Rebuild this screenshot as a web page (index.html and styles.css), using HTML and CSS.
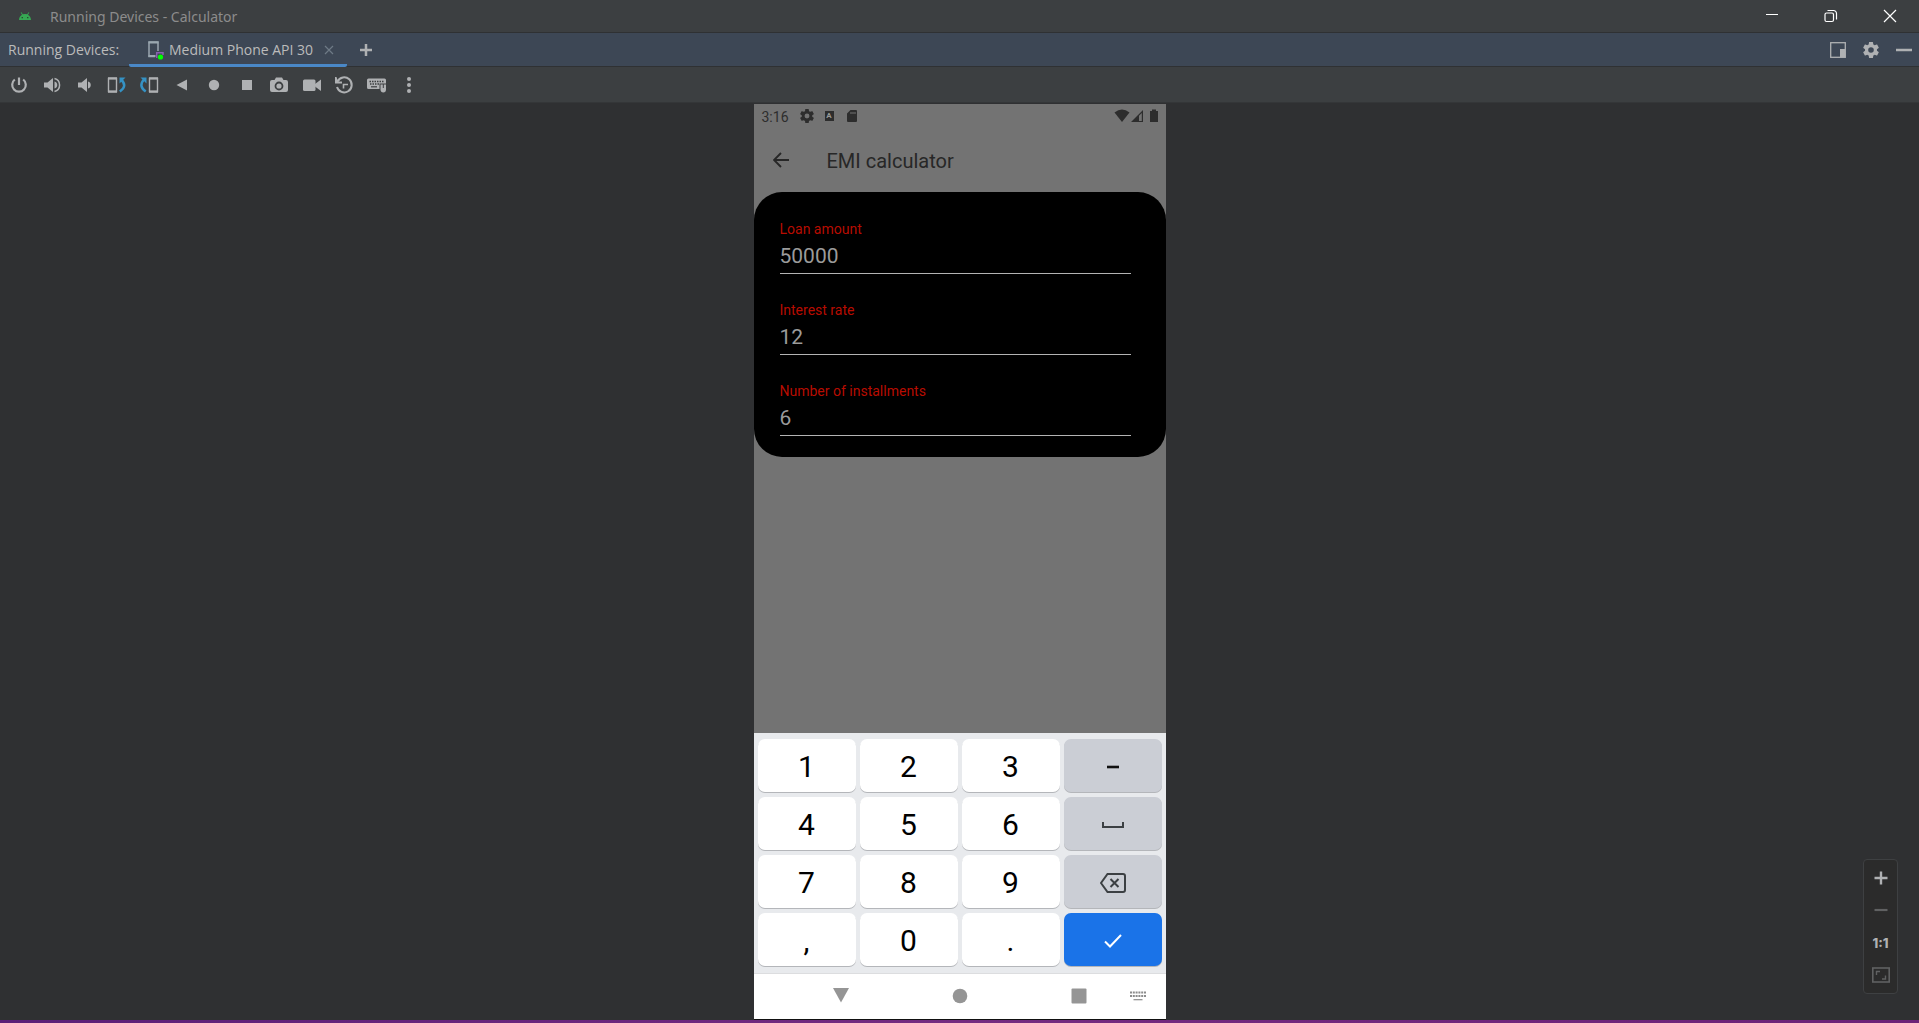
FILE: index.html
```html
<!DOCTYPE html>
<html lang="en">
<head>
<meta charset="utf-8">
<meta name="viewport" content="width=device-width, initial-scale=1">
<title>Running Devices - Calculator</title>
<link rel="stylesheet" href="styles.css">
</head>
<body>
<div class="window">
  <header class="titlebar">
    <svg class="app-logo" viewBox="0 0 12 8" width="12" height="8"><path fill="#36a853" d="M0 8C.1 5.500 1.300 3.700 3 2.700L1.700.6 2.400.2 3.800 2.300Q6 1.500 8.200 2.300L9.600.2 10.300.6 9 2.700C10.700 3.700 11.900 5.500 12 8Z"/><path fill="#24452d" d="M2.600 5h1.300v1.300H2.600zM8.100 5h1.300v1.300H8.100z"/></svg>
    <h1 class="window-title">Running Devices - Calculator</h1>
    <div class="window-controls">
      <button type="button" aria-label="Minimize"><svg width="14" height="14" viewBox="0 0 14 14"><path d="M1 5.500h12" stroke="#fff"/></svg></button>
      <button type="button" aria-label="Restore"><svg width="14" height="14" viewBox="0 0 14 14" fill="none" stroke="#fff" stroke-width="1.200"><rect x="1" y="4" width="8.500" height="8.500" rx="1.500"/><path d="M3.500 1.500h6a3 3 0 0 1 3 3v6"/></svg></button>
      <button type="button" aria-label="Close"><svg width="14" height="14" viewBox="0 0 14 14"><path d="M1 1l12 12M13 1L1 13" stroke="#fff" stroke-width="1.200"/></svg></button>
    </div>
  </header>

  <nav class="tabbar">
    <span class="tabbar-label">Running Devices:</span>
    <div class="tab">
      <svg width="16" height="20" viewBox="0 0 16 20"><path d="M7 16.500H1V2h9v9" fill="none" stroke="#9aa7b0" stroke-width="1.500"/><path d="M.5 2.500h10M.5 16h7" stroke="#9aa7b0" stroke-width="2"/><path d="M8.700 18V12.700H15V15" fill="none" stroke="#8a5fb0" stroke-width="1.500"/><circle cx="12.500" cy="17" r="2.600" fill="#0f0"/></svg>
      <a href="#device" class="tab-name">Medium Phone API 30</a>
      <button type="button" aria-label="Close tab"><svg width="10" height="10" viewBox="0 0 10 10"><path d="M1 1l8 8M9 1L1 9" stroke="#6e7a85" stroke-width="1.200"/></svg></button>
    </div>
    <button type="button" class="add-tab" aria-label="Add device"><svg width="14" height="14" viewBox="0 0 14 14"><path d="M7 1v12M1 7h12" stroke="#afb1b3" stroke-width="2.500"/></svg></button>
    <div class="tabbar-actions">
      <button type="button" aria-label="Dock"><svg width="16" height="16" viewBox="0 0 16 16"><rect x=".7" y=".7" width="14.600" height="14.600" fill="none" stroke="#afb1b3" stroke-width="1.300"/><path fill="#afb1b3" d="M10 7h5v8h-5z"/></svg></button>
      <button type="button" aria-label="Settings"><svg width="16" height="16" viewBox="2 2 20 20"><use href="#gear" fill="#afb1b3"/></svg></button>
      <button type="button" aria-label="Hide"><svg width="16" height="16" viewBox="0 0 16 16"><path d="M0 8h16" stroke="#afb1b3" stroke-width="2.500"/></svg></button>
    </div>
  </nav>

  <div class="toolbar" role="toolbar" aria-label="Device controls">
    <div class="tools">
      <button type="button" aria-label="Power"><svg viewBox="0 0 20 20"><path d="M5.800 4.500a6.800 6.800 0 1 0 8.400 0" fill="none" stroke="#afb1b3" stroke-width="2.200"/><path d="M10 2.500v7.500" stroke="#afb1b3" stroke-width="2.200"/></svg></button>
      <button type="button" aria-label="Volume up"><svg viewBox="0 0 20 20"><path fill="#afb1b3" d="M2 7.500h3.500L11 3v14l-5.500-4.500H2z"/><path d="M12.500 3.500a6.700 6.700 0 0 1 0 13" fill="none" stroke="#afb1b3" stroke-width="1.500"/><path fill="#afb1b3" d="M12.500 6.500a3.600 3.600 0 0 1 0 7z"/></svg></button>
      <button type="button" aria-label="Volume down"><svg viewBox="0 0 20 20"><path fill="#afb1b3" d="M4 7.500h3.500L13 3v14l-5.500-4.500H4zM14 6.500a3.600 3.600 0 0 1 0 7z"/></svg></button>
      <button type="button" aria-label="Rotate left"><svg viewBox="0 0 20 20"><path d="M1.500 3.500h8v13h-8z" fill="none" stroke="#afb1b3" stroke-width="1.400"/><path d="M1 3.400h9M1 16.600h9" stroke="#afb1b3" stroke-width="2.400"/><path d="M14 4.500q7 6.500-1.200 12" fill="none" stroke="#3592c4" stroke-width="2.500"/><path fill="#3592c4" d="M12.500 2.500h6l-6 6z"/></svg></button>
      <button type="button" aria-label="Rotate right"><svg viewBox="0 0 20 20"><path d="M10.500 3.500h8v13h-8z" fill="none" stroke="#afb1b3" stroke-width="1.400"/><path d="M10 3.400h9M10 16.600h9" stroke="#afb1b3" stroke-width="2.400"/><path d="M5 4.500q-6 6.500 1.700 12" fill="none" stroke="#3592c4" stroke-width="2.500"/><path fill="#3592c4" d="M7.500 2.500h-6l6 6z"/></svg></button>
      <button type="button" aria-label="Back"><svg viewBox="0 0 20 20"><path fill="#afb1b3" d="M15 4.500v11L4.500 10z"/></svg></button>
      <button type="button" aria-label="Home"><svg viewBox="0 0 20 20"><circle cx="10" cy="10" r="5.200" fill="#afb1b3"/></svg></button>
      <button type="button" aria-label="Overview"><svg viewBox="0 0 20 20"><path fill="#afb1b3" d="M5 5h10v10H5z"/></svg></button>
      <button type="button" aria-label="Screenshot"><svg viewBox="0 0 20 20"><path fill="#afb1b3" fill-rule="evenodd" d="M7 2.500h6l1.500 2.500H17q2 0 2 2v8q0 2-2 2H3q-2 0-2-2V7q0-2 2-2h2.500zM10 6.600a4.400 4.400 0 1 0 0 8.800 4.400 4.400 0 0 0 0-8.800z"/><circle cx="10" cy="11" r="2.600" fill="#afb1b3"/></svg></button>
      <button type="button" aria-label="Record"><svg viewBox="0 0 20 20"><rect x="1" y="4.500" width="12.500" height="11.500" rx="1.500" fill="#afb1b3"/><path fill="#afb1b3" d="M13 9l6-4.500v11.500L13 11.500z"/></svg></button>
      <button type="button" aria-label="Snapshots"><svg viewBox="0 0 20 20"><path d="M3.500 6.500A7.500 7.500 0 1 1 3 12" fill="none" stroke="#afb1b3" stroke-width="2"/><path fill="#afb1b3" d="M1 2v6.500h7v-2H4L2.500 2z"/><path d="M9.500 13.500v-4H14" fill="none" stroke="#afb1b3" stroke-width="1.600"/></svg></button>
      <button type="button" aria-label="Hardware input"><svg viewBox="0 0 20 20"><path fill="#afb1b3" d="M1.500 3.500h16q1.500 0 1.500 1.500v3.500h-6.500V14h-11Q0 14 0 12.500V5q0-1.500 1.500-1.500z"/><path d="M2.500 6.500h14.500M3 9h10" stroke="#3c3f41" stroke-width="1.400" stroke-dasharray="1.500 1"/><path d="M4 11.800h6" stroke="#3c3f41" stroke-width="1.200"/><path fill="#afb1b3" d="M13.500 9.500h5.500v5q0 3-2.700 3t-2.800-3z"/><path d="M16.300 9v4" stroke="#3c3f41"/></svg></button>
      <button type="button" aria-label="More"><svg viewBox="0 0 20 20" fill="#afb1b3"><circle cx="10" cy="4" r="2"/><circle cx="10" cy="10" r="2"/><circle cx="10" cy="16" r="2"/></svg></button>
    </div>
  </div>

  <main class="canvas">
    <section class="phone" id="device">
      <div class="statusbar">
        <span class="clock">3:16</span>
        <svg width="14" height="14" viewBox="2 2 20 20"><path id="gear" fill-rule="evenodd" d="M19.430 12.980c.04-.32.07-.64.07-.98s-.03-.66-.07-.98l2.110-1.650c.19-.15.24-.42.120-.64l-2-3.460c-.12-.22-.39-.3-.61-.22l-2.490 1a7.300 7.300 0 0 0-1.690-.98l-.38-2.650A.49.49 0 0 0 14 2h-4c-.25 0-.46.18-.49.42l-.38 2.650c-.61.25-1.170.59-1.690.98l-2.490-1c-.23-.09-.49 0-.61.22l-2 3.460c-.13.22-.07.49.120.64l2.110 1.650a7.900 7.900 0 0 0 0 1.960l-2.110 1.650c-.19.15-.24.42-.12.64l2 3.460c.12.22.39.3.61.22l2.490-1c.52.4 1.080.73 1.690.98l.38 2.650c.03.24.24.42.49.42h4c.25 0 .46-.18.49-.42l.38-2.650c.61-.25 1.170-.59 1.690-.98l2.490 1c.23.09.49 0 .61-.22l2-3.460c.12-.22.07-.49-.12-.64zM12 15.500a3.500 3.500 0 1 1 0-7 3.500 3.500 0 0 1 0 7z"/></svg>
        <span class="input-badge">A</span>
        <svg width="12" height="14" viewBox="0 0 12 14"><path fill-rule="evenodd" d="M4.500 1H10q1 0 1 1v10q0 1-1 1H2q-1 0-1-1V4.500zM4.500 3v2h1V3zm2 0v2h1V3zm2 0v2h1V3z"/></svg>
        <div class="status-right">
          <svg width="16" height="14" viewBox="0 0 16 14"><path d="M.5 3.500Q8-2.500 15.500 3.500L8 13z"/></svg>
          <svg width="14" height="14" viewBox="0 0 14 14"><path fill-rule="evenodd" d="M13 1v12H1zM11.800 4v8H9V6.800z"/></svg>
          <svg width="10" height="14" viewBox="0 0 10 14"><path d="M3 .5h4V2h2v11H1V2h2z"/></svg>
        </div>
      </div>
      <div class="appbar">
        <button type="button" aria-label="Navigate up"><svg width="16" height="16" viewBox="0 0 16 16"><path d="M16 8H1.500M8 1L1 8l7 7" fill="none" stroke="#272727" stroke-width="1.900"/></svg></button>
        <h2 class="app-title">EMI calculator</h2>
      </div>
      <form class="card">
        <div class="field"><label for="loan">Loan amount</label><input id="loan" type="text" inputmode="numeric" value="50000"></div>
        <div class="field"><label for="rate">Interest rate</label><input id="rate" type="text" inputmode="numeric" value="12"></div>
        <div class="field"><label for="count">Number of installments</label><input id="count" type="text" inputmode="numeric" value="6"></div>
      </form>
      <div class="keyboard">
        <button type="button">1</button><button type="button">2</button><button type="button">3</button><button type="button" class="fn" aria-label="Minus"><svg width="24" height="24" viewBox="0 0 24 24"><path d="M6 12h12" stroke="#111" stroke-width="2.600"/></svg></button>
        <button type="button">4</button><button type="button">5</button><button type="button">6</button><button type="button" class="fn" aria-label="Space"><svg width="24" height="24" viewBox="0 0 24 24"><path d="M2 9v5h20V9" fill="none" stroke="#3c4043" stroke-width="2"/></svg></button>
        <button type="button">7</button><button type="button">8</button><button type="button">9</button><button type="button" class="fn" aria-label="Delete"><svg width="26" height="20" viewBox="0 0 26 20"><path d="M7.500 1H23q2 0 2 2v14q0 2-2 2H7.500L1 10z" fill="none" stroke="#3c4043" stroke-width="2"/><path d="M10.500 6l8 8m0-8l-8 8" stroke="#3c4043" stroke-width="2"/></svg></button>
        <button type="button">,</button><button type="button">0</button><button type="button">.</button><button type="button" class="done" aria-label="Done"><svg width="18" height="14" viewBox="0 0 18 14"><path d="M1 7.500l5 5L17 1" fill="none" stroke="#fff" stroke-width="2"/></svg></button>
      </div>
      <div class="navbar">
        <button type="button" aria-label="Hide keyboard"><svg width="16" height="16" viewBox="0 0 16 16"><path d="M0 0h16L8 14.500z"/></svg></button>
        <button type="button" aria-label="Home screen"><svg width="16" height="16" viewBox="0 0 16 16"><circle cx="8" cy="8" r="7.300"/></svg></button>
        <button type="button" aria-label="Recent apps"><svg width="16" height="16" viewBox="0 0 16 16"><rect x=".5" y=".5" width="15" height="15" rx="1"/></svg></button>
        <button type="button" class="switch-ime" aria-label="Switch keyboard"><svg width="16" height="10" viewBox="0 0 16 10"><path d="M0 1.500h16M0 5h16" stroke="#8c8c8c" stroke-width="2" stroke-dasharray="2 .8"/><path d="M3.500 8.700h9" stroke="#8c8c8c" stroke-width="1.200"/></svg></button>
      </div>
    </section>

    <div class="zoom-panel">
      <button type="button" aria-label="Zoom in"><svg width="14" height="14" viewBox="0 0 14 14"><path d="M7 .5v13M.5 7h13" stroke="#afb1b3" stroke-width="2.400"/></svg></button>
      <button type="button" aria-label="Zoom out"><svg width="14" height="14" viewBox="0 0 14 14"><path d="M.5 7h13" stroke="#606162" stroke-width="2.200"/></svg></button>
      <button type="button">1:1</button>
      <button type="button" aria-label="Zoom to fit"><svg width="18" height="16" viewBox="0 0 18 16" fill="none" stroke="#606162"><rect x=".8" y="1" width="16.400" height="14" stroke-width="1.600"/><path d="M4.500 8V4.500H8M13.500 8.500V12H10" stroke-width="1.400"/></svg></button>
    </div>
  </main>
  <div class="desktop-edge"></div>
</div>
</body>
</html>
```
FILE: styles.css
```css
* { box-sizing: border-box; }
body { margin: 0; background: #2f3032; font-family: "Open Sans", "Noto Sans", sans-serif; }
h1, h2 { margin: 0; font-weight: 400; }
button { display: flex; align-items: center; justify-content: center; padding: 0; border: 0; background: none; font: inherit; color: inherit; }
svg { display: block; flex: none; }
.window { display: flex; flex-direction: column; min-height: 100vh; }

.titlebar { display: flex; align-items: center; height: 33px; padding-left: 19px; background: #3c3f41; border-bottom: 1px solid #2f3133; }
.window-title { margin-left: 19px; padding-top: 2px; font-family: "Noto Sans", sans-serif; font-size: 14px; line-height: 20px; color: #8c8c8c; }
.window-controls { display: flex; margin-left: auto; }
.window-controls button { width: 59px; height: 32px; }

.tabbar { display: flex; align-items: center; height: 34px; padding: 0 7px 0 8px; background: #3d4755; border-bottom: 1px solid #2f3133; font-size: 14px; line-height: 20px; color: #bbb; }
.tabbar-label { width: 121px; padding-top: 1px; }
.tab { display: flex; align-items: center; height: 34px; padding: 4px 13px 0 19px; border-bottom: 3px solid #4a88c7; border-radius: 0 0 2px 2px; }
.tab-name { margin-left: 5px; width: 155px; color: inherit; text-decoration: none; white-space: nowrap; }
.add-tab { margin-left: 12px; }
.tabbar-actions { display: flex; gap: 17px; margin-left: auto; padding-top: 1px; }

.toolbar { height: 36px; padding: 8px 9px; background: #3c3f41; border-bottom: 1px solid #343638; }
.tools { display: flex; justify-content: space-between; width: 410px; }
.tools svg { width: 20px; height: 20px; }

.canvas { position: relative; display: flex; flex: 1; justify-content: center; padding-top: 1px; }
.phone { display: flex; flex-direction: column; width: 412px; background: #737373; font-family: Roboto, sans-serif; }

.statusbar { display: flex; align-items: center; height: 24px; padding: 0 7px 0 8px; fill: #2d2d2d; color: #2d2d2d; }
.clock { width: 38px; padding-top: 2px; font-size: 14px; line-height: 16px; }
.input-badge { width: 9px; height: 10px; margin: 0 12px 0 11px; background: #2d2d2d; color: #999; font-size: 8px; font-weight: 700; line-height: 10px; text-align: center; }
.status-right { display: flex; margin-left: auto; }
.status-right svg:last-child { margin-left: 5px; }

.appbar { display: flex; align-items: center; height: 64px; padding-left: 19px; }
.app-title { margin-left: 38px; padding-top: 2px; font-size: 20px; line-height: 24px; color: #272727; }

.card { display: flex; flex-direction: column; gap: 27px; padding: 28px 35px 21px 26px; border-radius: 28px; background: #000; }
.field { display: flex; flex-direction: column; }
.field label { font-size: 14px; line-height: 18px; color: #b80c00; }
.field input { width: 100%; height: 36px; padding: 0; border: 0; border-bottom: 1px solid #b3b3b3; background: none; color: #9b9b9b; font: 21px/24px Roboto, sans-serif; outline: 0; }

.keyboard { display: grid; grid-template-columns: repeat(4, 1fr); grid-auto-rows: 53px; gap: 5px 4px; margin-top: auto; padding: 6px 4px 7px; background: #e8eaed; }
.keyboard button { border-radius: 7px; background: #fff; box-shadow: 0 1px 0 #b4b6ba; color: #000; font-size: 30px; line-height: 36px; padding-top: 2px; }
.keyboard .fn { background: #cbced5; }
.keyboard .done { background: #1a73e8; }

.navbar { display: flex; align-items: center; gap: 95px; height: 47px; padding: 0 16px 1px 75px; background: #fff; border-top: 1px solid #dcdddf; border-bottom: 1px solid #111; fill: #959595; }
.navbar button { width: 24px; height: 24px; }
.navbar .switch-ime { margin-left: -60px; }

.zoom-panel { position: absolute; right: 21px; bottom: 26px; display: flex; flex-direction: column; justify-content: space-around; width: 35px; height: 135px; padding: 2px 0; border: 1px solid #3e4042; border-radius: 4px; background: #2b2b2b; color: #afb1b3; font: 800 13px/16px Inter, sans-serif; }
.zoom-panel button { height: 32px; }
.desktop-edge { height: 3px; background: linear-gradient(90deg, #5a1f77, #742b80 50%, #6b2277); }
```
